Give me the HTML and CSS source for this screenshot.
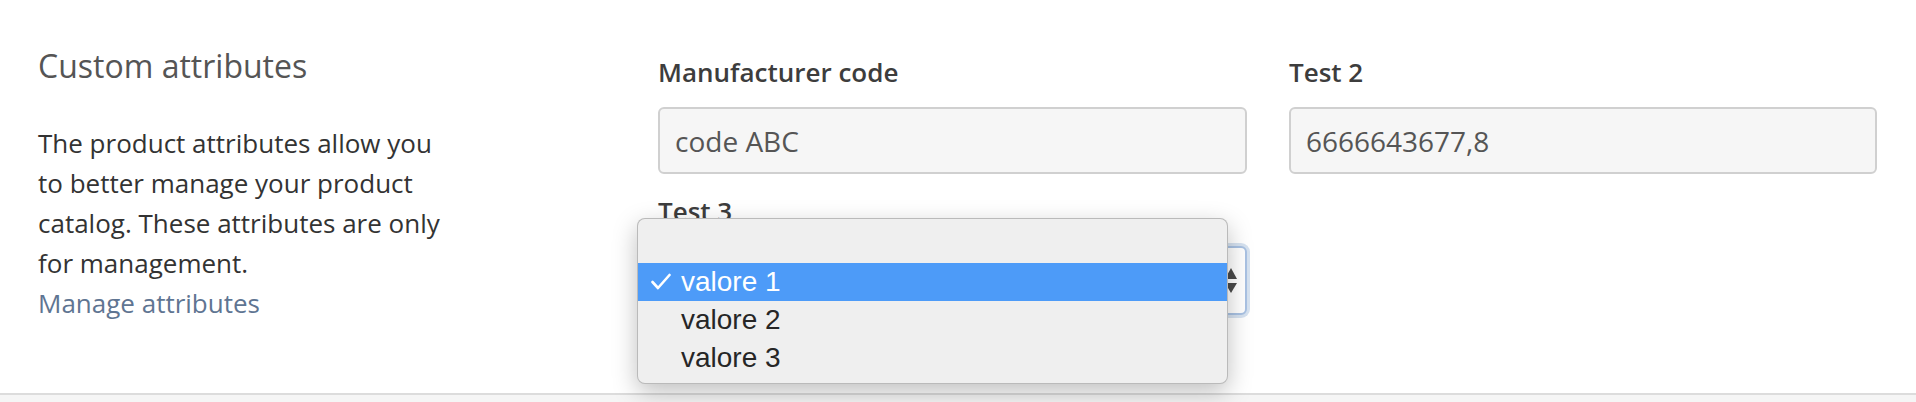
FILE: index.html
```html
<!DOCTYPE html>
<html lang="en">
<head>
<meta charset="utf-8">
<title>Custom attributes</title>
<link rel="stylesheet" href="styles.css">
</head>
<body>
<div class="page">
  <section class="attrs">
    <div class="intro">
      <h2 class="intro-title">Custom attributes</h2>
      <p class="intro-text">The product attributes allow you to better manage your product catalog. These attributes are only for management.<br><a class="intro-link" href="#">Manage attributes</a></p>
    </div>
    <div class="fields">
      <div class="field">
        <label class="field-label">Manufacturer code</label>
        <div class="input">code ABC</div>
      </div>
      <div class="field">
        <label class="field-label">Test 2</label>
        <div class="input">6666643677,8</div>
      </div>
      <div class="field">
        <label class="field-label">Test 3</label>
        <div class="select-wrap">
          <div class="select">
            <span class="arrows">
              <svg width="12" height="26" viewBox="0 0 12 26"><path d="M6 0 L12 11 L0 11 Z" fill="#4a4a4a"/><path d="M0 15 L12 15 L6 25 Z" fill="#4a4a4a"/></svg>
            </span>
          </div>
          <div class="popup">
            <div class="opt"></div>
            <div class="opt opt-selected"><svg class="check" width="20" height="18" viewBox="0 0 20 18"><polyline points="1.5,9 7,15 18.5,2" fill="none" stroke="#fff" stroke-width="2.6" stroke-linecap="round" stroke-linejoin="round"/></svg>valore 1</div>
            <div class="opt">valore 2</div>
            <div class="opt">valore 3</div>
          </div>
        </div>
      </div>
    </div>
  </section>
  <div class="footer"></div>
</div>
</body>
</html>
```

FILE: styles.css
```css
* { box-sizing: border-box; }
html, body { margin: 0; padding: 0; background: #fff; }
body { font-family: "Open Sans", "Liberation Sans", sans-serif; color: #333; }

.page { width: 1916px; height: 402px; overflow: hidden; background: #f5f5f5; }

.attrs {
  display: flex;
  height: 395px;
  padding: 49px 39px 0 38px;
  background: #fff;
  border-bottom: 2px solid #dcdcdc;
}

.intro { width: 620px; flex: none; }
.intro-title {
  margin: 0 0 41px;
  font-size: 32px;
  line-height: 33px;
  font-weight: 400;
  color: #555;
}
.intro-text {
  margin: 0;
  width: 412px;
  font-size: 26px;
  line-height: 40px;
  color: #333;
}
.intro-link { color: #5f7592; text-decoration: none; }

.fields {
  display: grid;
  grid-template-columns: 589px 588px;
  column-gap: 42px;
  row-gap: 17px;
  align-content: start;
  margin-top: 3px;
}
.field { display: flex; flex-direction: column; }
.field-label {
  font-size: 26px;
  line-height: 40px;
  font-weight: 600;
  color: #3d3d3d;
  margin-bottom: 15px;
}
.input {
  height: 67px;
  border: 2px solid #d0d0d0;
  border-radius: 6px;
  background: #f6f6f6;
  padding: 0 15px;
  display: flex;
  align-items: center;
  font-size: 28px;
  color: #555;
}

.select-wrap { position: relative; }
.select {
  height: 69px;
  border: 2px solid #a9c2e3;
  border-radius: 6px;
  background: #fff;
  box-shadow: 0 0 0 3px #d6e2f0;
  display: flex;
  align-items: center;
  justify-content: flex-end;
  padding-right: 8px;
}
.arrows { display: flex; }

.popup {
  position: absolute;
  left: -21px;
  top: -28px;
  width: 591px;
  height: 166px;
  padding-top: 6px;
  background: #efefef;
  border: 1px solid rgba(0, 0, 0, 0.22);
  border-radius: 8px;
  box-shadow: 0 8px 24px rgba(0, 0, 0, 0.25);
  font-family: "Liberation Sans", Arial, sans-serif;
  font-size: 28px;
  color: #262626;
}
.opt {
  height: 38px;
  display: flex;
  align-items: center;
  padding-left: 43px;
  position: relative;
}
.opt-selected { background: #4d9bf8; color: #fff; }
.check { position: absolute; left: 13px; top: 10px; }

.footer { height: 7px; background: #f5f5f5; }
```
